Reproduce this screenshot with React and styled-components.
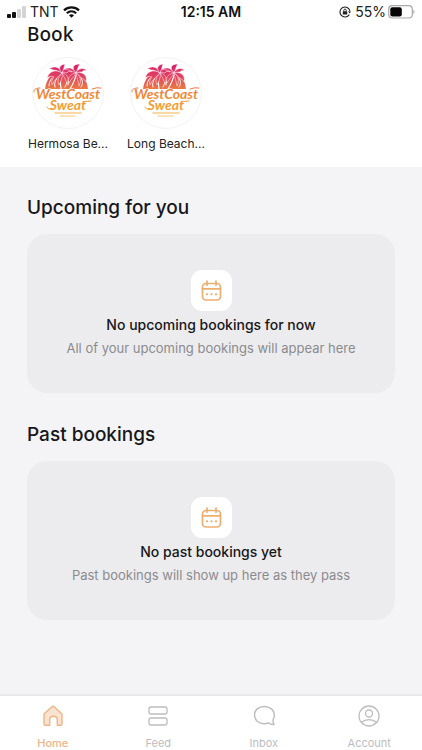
import React from 'react';
import styled, { createGlobalStyle } from 'styled-components';

const GlobalStyle = createGlobalStyle`
  *, *::before, *::after { box-sizing: border-box; }
  body {
    margin: 0;
    background: #f4f4f7;
    color: #17171a;
    font-family: Inter, 'Liberation Sans', sans-serif;
  }
  h1, h2, h3, p, ul { margin: 0; padding: 0; }
  ul { list-style: none; }
  svg { display: block; flex: none; }
`;

const Screen = styled.div`
  display: flex;
  flex-direction: column;
  min-height: 100vh;
`;

const Header = styled.header`
  background: #ffffff;
  padding-bottom: 14px;
`;

const StatusBar = styled.div`
  display: grid;
  grid-template-columns: 1fr auto 1fr;
  align-items: center;
  height: 24px;
  padding: 0 7px;
  font-size: 14px;
  line-height: 24px;
  color: #222222;
`;

const StatusGroup = styled.div`
  display: flex;
  align-items: center;
  gap: ${({ $gap }) => $gap}px;
  justify-content: ${({ $end }) => ($end ? 'flex-end' : 'flex-start')};
`;

const Clock = styled.time`
  font-weight: 600;
  color: #111111;
`;

const BookTitle = styled.h1`
  padding: 0 27px;
  font-family: 'Noto Sans', sans-serif;
  font-size: 19px;
  font-weight: 500;
  line-height: 20px;
`;

const StudioList = styled.ul`
  display: flex;
  gap: 16px;
  padding: 13px 27px 0;
`;

const Studio = styled.a`
  display: flex;
  flex-direction: column;
  align-items: center;
  gap: 6px;
  width: 82px;
  color: #222225;
  text-decoration: none;
`;

const StudioLogo = styled.span`
  display: block;
  width: 72px;
  height: 72px;
  border: 1px solid #f3f3f4;
  border-radius: 50%;
`;

const StudioName = styled.span`
  font-size: 12px;
  line-height: 18px;
  white-space: nowrap;
`;

const Main = styled.main`
  flex: 1;
  display: flex;
  flex-direction: column;
  gap: 29px;
  padding: 28px 27px;
`;

const Section = styled.section`
  display: flex;
  flex-direction: column;
  gap: 13px;
`;

const SectionTitle = styled.h2`
  font-size: 19px;
  font-weight: 500;
  line-height: 26px;
`;

const EmptyCard = styled.div`
  display: flex;
  flex-direction: column;
  align-items: center;
  padding: 36px 16px 33px;
  border-radius: 20px;
  background: #ececee;
  text-align: center;
`;

const IconTile = styled.div`
  display: grid;
  place-items: center;
  width: 41px;
  height: 41px;
  margin-bottom: 3px;
  border-radius: 11px;
  background: #ffffff;
  color: #ebae72;
`;

const EmptyTitle = styled.h3`
  font-size: 14px;
  font-weight: 500;
  line-height: 22px;
`;

const EmptyText = styled.p`
  font-size: 13px;
  line-height: 24px;
  color: #8b8b8e;
`;

const TabBar = styled.nav`
  position: sticky;
  bottom: 0;
  display: grid;
  grid-template-columns: repeat(4, 1fr);
  border-top: 2px solid #e9e9eb;
  background: #ffffff;
`;

const Tab = styled.a`
  display: flex;
  flex-direction: column;
  align-items: center;
  gap: 8px;
  padding-top: 8px;
  color: ${({ $active }) => ($active ? '#edb686' : '#bdbdbf')};
  font-size: 11px;
  font-weight: ${({ $active }) => ($active ? 500 : 400)};
  line-height: 14px;
  text-decoration: none;
`;

function SignalIcon() {
  return (
    <svg width="19" height="12" viewBox="0 0 19 12" aria-label="Signal strength">
      <rect x="0" y="8" width="4" height="4" rx="1" fill="#111" />
      <rect x="5" y="6" width="4" height="6" rx="1" fill="#111" />
      <rect x="10" y="3" width="4" height="9" rx="1" fill="#d4d4d4" />
      <rect x="15" y="0" width="4" height="12" rx="1" fill="#d4d4d4" />
    </svg>
  );
}

function WifiIcon() {
  return (
    <svg width="17" height="12" viewBox="0 0 17 12" fill="none" stroke="#111" strokeWidth="2.2" aria-label="Wi-Fi">
      <path d="M1 4.4C5.2.4 11.8.4 16 4.4" />
      <path d="M3.8 7.3c2.7-2.5 6.7-2.5 9.4 0" />
      <path d="M8.500 11.700 6 9.200c1.400-1.200 3.600-1.200 5 0z" fill="#111" stroke="none" />
    </svg>
  );
}

function RotationLockIcon() {
  return (
    <svg width="12" height="12" viewBox="0 0 12 12" fill="none" stroke="#222" strokeWidth="1.1" aria-label="Rotation lock">
      <path d="M10.300 8.600A5 5 0 1 1 10.900 5" />
      <path d="m9 5.200 3 .2-1.300 2.200z" fill="#222" stroke="none" />
      <rect x="3.800" y="5.300" width="4.400" height="3.200" rx=".5" fill="#222" stroke="none" />
      <path d="M4.800 5.500V4.300a1.200 1.200 0 0 1 2.400 0v1.200" strokeWidth=".9" />
    </svg>
  );
}

function BatteryIcon() {
  return (
    <svg width="27" height="14" viewBox="0 0 27 14" aria-label="Battery">
      <rect x=".7" y=".7" width="23.600" height="12.300" rx="3.500" fill="none" stroke="#a9a9a9" strokeWidth="1.200" />
      <rect x="2.300" y="2.300" width="11.500" height="9.100" rx="2" fill="#050505" />
      <path d="M25.400 4.800c1.500.5 1.500 3.600 0 4.200z" fill="#a9a9a9" />
    </svg>
  );
}

function StudioArt({ id }) {
  const ink = `url(#${id})`;
  return (
    <svg width="70" height="70" viewBox="0 0 70 70" role="img" aria-label="WestCoast Sweat">
      <defs>
        <linearGradient id={id} gradientUnits="userSpaceOnUse" x1="0" y1="7" x2="0" y2="60">
          <stop offset="0" stopColor="#d91f6b" />
          <stop offset=".22" stopColor="#e04260" />
          <stop offset=".45" stopColor="#ea7a42" />
          <stop offset=".7" stopColor="#f0982f" />
          <stop offset="1" stopColor="#f2ae45" />
        </linearGradient>
      </defs>
      <path d="M12 31C13 22 19 14 26 12h17c6 3 11 10 12 19z" fill={ink} />
      <g fill="none" stroke="#fff" strokeLinecap="round">
        <path d="M28 17c-1 5-1 9 0 14M43 17c-1 5-3 9-6 14" strokeWidth="1.2" />
        <path d="M19 20c-2 2-3 5-3 8M24 20c-2 3-3 6-2 9M33 19c2 3 1 6-1 10M38 20c-2 2-3 5-3 7M48 20c2 3 2 6 0 9" strokeWidth="1" />
      </g>
      <g fill={ink} stroke="#fff" strokeWidth=".5" strokeLinejoin="round">
        <path d="M29 15c-6-4-13-2-15 5 3-2 5-2 7-1-2 2-3 5-2 8 2-5 6-8 10-12z" />
        <path d="M29 15c-2-6-8-8-13-4 2 0 3 0 4 1 3 0 6 1 9 3z" />
        <path d="M29 15c-4-4-3-8 3-9-1 2-1 6-3 9z" />
        <path d="M29 15c2-6 7-6 10-1-3-1-4-1-5 1-2-1-4-1-5 0z" />
        <path d="M29 15c-4 4-5 8-3 12 2-4 4-7 3-12z" />
        <path d="M29 15c5 1 8 5 5 11-1-4-3-7-5-11z" />
        <path d="M43 15c-5-5-3-9 4-9-2 2-2 5-4 9z" />
        <path d="M43 15c-3-5-7-6-11-4 4 1 6 2 11 4z" />
        <path d="M43 15c2-5 8-6 11-2-3-1-4 0-5 1-2 0-4 0-6 1z" />
        <path d="M43 15c7-2 12 3 10 9-2-3-3-4-5-4-1-2-3-4-5-5z" />
        <path d="M43 15c-6 1-9 5-7 10 2-4 5-6 7-10z" />
        <path d="M43 15c4 3 6 7 3 13-1-5-2-8-3-13z" />
      </g>
      <g
        fill={ink}
        stroke="#fff"
        strokeWidth="1.2"
        paintOrder="stroke"
        fontFamily="Lato, sans-serif"
        fontStyle="italic"
        fontWeight="700"
        textAnchor="middle"
      >
        <text x="35" y="41" fontSize="14">WestCoast</text>
        <text x="35" y="52" fontSize="14">Sweat</text>
      </g>
      <g fill="none" stroke={ink} strokeLinecap="round">
        <path d="M1 34c-1-3 3-4 6-4M59 31q5-2 9-1M14 49q1 3 5 2M50 44q5-1 8-1" strokeWidth="1" />
        <path d="M22 55h26" strokeWidth="1.4" opacity=".6" />
        <path d="M27 58h15" strokeWidth="1" opacity=".7" />
      </g>
    </svg>
  );
}

function CalendarIcon() {
  return (
    <svg width="21" height="22" viewBox="0 0 21 22" fill="none" stroke="currentColor" strokeWidth="1.7" strokeLinecap="round" aria-hidden="true">
      <rect x="1.500" y="3.500" width="18" height="16.500" rx="3.500" />
      <path d="M1.500 8.800h18M6 1.200v4M15 1.200v4" />
      <path d="M6 14.300h.01M10.500 14.300h.01M15 14.300h.01" strokeWidth="2.3" />
    </svg>
  );
}

function HomeIcon() {
  return (
    <svg width="24" height="24" viewBox="0 0 24 24" stroke="currentColor" strokeWidth="1.4" strokeLinejoin="round" fill="#fae3d1" aria-hidden="true">
      <path d="M3 10 10.600 3a2 2 0 0 1 2.800 0L21 10v10a1.300 1.300 0 0 1-1.300 1.300h-3.400V16c0-5-7.600-5-7.600 0v5.300H4.300A1.300 1.300 0 0 1 3 20z" />
    </svg>
  );
}

function FeedIcon() {
  return (
    <svg width="24" height="24" viewBox="0 0 24 24" stroke="currentColor" strokeWidth="1.3" fill="none" aria-hidden="true">
      <rect x="3" y="3" width="18" height="7" rx="2" />
      <rect x="3" y="14" width="18" height="7" rx="2" />
    </svg>
  );
}

function InboxIcon() {
  return (
    <svg width="24" height="24" viewBox="0 0 24 24" stroke="currentColor" strokeWidth="1.4" strokeLinejoin="round" fill="none" aria-hidden="true">
      <path d="M12.300 2.500C6.500 2.500 2.500 6 2.500 11s4 8.700 9.500 8.700c1.700 0 3.200-.2 4.500-.9 1.500 1.400 3.800 2 5.500 1.600-.7-1.100-1.100-3-1-4.600 1-1.300 1.300-3 1.300-4.800 0-5-4.300-8.500-10-8.500z" />
    </svg>
  );
}

function AccountIcon() {
  return (
    <svg width="24" height="24" viewBox="0 0 24 24" stroke="currentColor" strokeWidth="1.3" fill="none" aria-hidden="true">
      <circle cx="12" cy="12" r="10" />
      <circle cx="12" cy="9.500" r="3.500" />
      <path d="M4.500 18.300c4-3.700 11-3.700 15 0" />
    </svg>
  );
}

const studios = [
  { id: 'hermosa', name: 'Hermosa Be...' },
  { id: 'long-beach', name: 'Long Beach...' },
];

const sections = [
  {
    title: 'Upcoming for you',
    heading: 'No upcoming bookings for now',
    text: 'All of your upcoming bookings will appear here',
  },
  {
    title: 'Past bookings',
    heading: 'No past bookings yet',
    text: 'Past bookings will show up here as they pass',
  },
];

const tabs = [
  { label: 'Home', Icon: HomeIcon, active: true },
  { label: 'Feed', Icon: FeedIcon },
  { label: 'Inbox', Icon: InboxIcon },
  { label: 'Account', Icon: AccountIcon },
];

export default function App() {
  return (
    <>
      <GlobalStyle />
      <Screen>
        <Header>
          <StatusBar>
            <StatusGroup $gap={4}>
              <SignalIcon />
              <span>TNT</span>
              <WifiIcon />
            </StatusGroup>
            <Clock>12:15 AM</Clock>
            <StatusGroup $gap={2} $end>
              <StatusGroup $gap={4}>
                <RotationLockIcon />
                <span>55%</span>
              </StatusGroup>
              <BatteryIcon />
            </StatusGroup>
          </StatusBar>
          <BookTitle>Book</BookTitle>
          <StudioList>
            {studios.map(({ id, name }) => (
              <li key={id}>
                <Studio href={`#${id}-studio`}>
                  <StudioLogo>
                    <StudioArt id={id} />
                  </StudioLogo>
                  <StudioName>{name}</StudioName>
                </Studio>
              </li>
            ))}
          </StudioList>
        </Header>
        <Main>
          {sections.map(({ title, heading, text }) => (
            <Section key={title}>
              <SectionTitle>{title}</SectionTitle>
              <EmptyCard>
                <IconTile>
                  <CalendarIcon />
                </IconTile>
                <EmptyTitle>{heading}</EmptyTitle>
                <EmptyText>{text}</EmptyText>
              </EmptyCard>
            </Section>
          ))}
        </Main>
        <TabBar aria-label="Main">
          {tabs.map(({ label, Icon, active }) => (
            <Tab key={label} href={`#${label.toLowerCase()}`} $active={active} aria-current={active ? 'page' : undefined}>
              <Icon />
              {label}
            </Tab>
          ))}
        </TabBar>
      </Screen>
    </>
  );
}
